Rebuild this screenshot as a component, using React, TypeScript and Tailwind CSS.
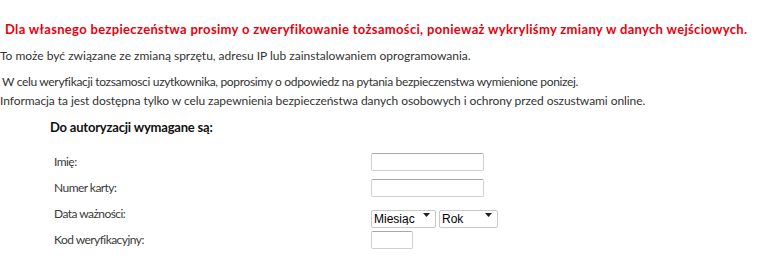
const fields = [
  { label: "Imię:", kind: "text", width: "w-[113px]" },
  { label: "Numer karty:", kind: "text", width: "w-[113px]" },
  { label: "Data ważności:", kind: "date", width: "" },
  { label: "Kod weryfikacyjny:", kind: "text", width: "w-[42px]" },
];

function Select({ label, width }: { label: string; width: string }) {
  return (
    <div className={`relative h-[18px] ${width}`}>
      <select className="appearance-none w-full h-full border border-[#c8c8c8] rounded-[2px] bg-white pl-[2px] text-[12px] leading-none text-black font-['Liberation_Sans',sans-serif] outline-none">
        <option>{label}</option>
      </select>
      {/* dropdown arrow */}
      <svg
        className="absolute right-[6px] top-[8px] pointer-events-none"
        width="7"
        height="4"
        viewBox="0 0 7 4"
      >
        <path d="M0 0h7L3.5 4z" fill="#222" />
      </svg>
    </div>
  );
}

export default function App() {
  return (
    <div className="w-[765px] h-[274px] bg-white font-['Lato',sans-serif] text-[#333]">
      <div className="pt-[20px]">
        <h1 className="pl-[5px] text-[13px] leading-[18px] font-bold tracking-[0.33px] text-[#e8000c]">
          Dla własnego bezpieczeństwa prosimy o zweryfikowanie tożsamości, ponieważ wykryliśmy zmiany w danych wejściowych.
        </h1>

        <p className="mt-[9px] text-[12px] leading-[18px]">
          To może być związane ze zmianą sprzętu, adresu IP lub zainstalowaniem oprogramowania.
        </p>

        <div className="mt-[7px] text-[12px] leading-[19px]">
          <p className="pl-[2px] tracking-[-0.33px]">
            W celu weryfikacji tozsamosci uzytkownika, poprosimy o odpowiedz na pytania bezpieczenstwa wymienione ponizej.
          </p>
          <p className="tracking-[-0.07px]">
            Informacja ta jest dostępna tylko w celu zapewnienia bezpieczeństwa danych osobowych i ochrony przed oszustwami online.
          </p>
        </div>

        <h2 className="mt-[8px] pl-[50px] text-[13px] leading-[18px] font-bold tracking-[-0.2px] text-[#111]">
          Do autoryzacji wymagane są:
        </h2>

        <div className="mt-[13px]">
          {fields.map((f) => (
            <div key={f.label} className="flex items-center h-[26px]">
              <span className="w-[371px] pl-[54px] text-[12px] tracking-[-0.55px] text-[#3a3a3a]">{f.label}</span>
              {f.kind === "date" ? (
                <div className="flex gap-[3px]">
                  <Select label="Miesiąc" width="w-[65px]" />
                  <Select label="Rok" width="w-[59px]" />
                </div>
              ) : (
                <input
                  type="text"
                  className={`${f.width} h-[18px] border border-[#d0d0d0] border-t-[#a8a8a8] rounded-[2px] bg-white outline-none`}
                />
              )}
            </div>
          ))}
        </div>
      </div>
    </div>
  );
}
